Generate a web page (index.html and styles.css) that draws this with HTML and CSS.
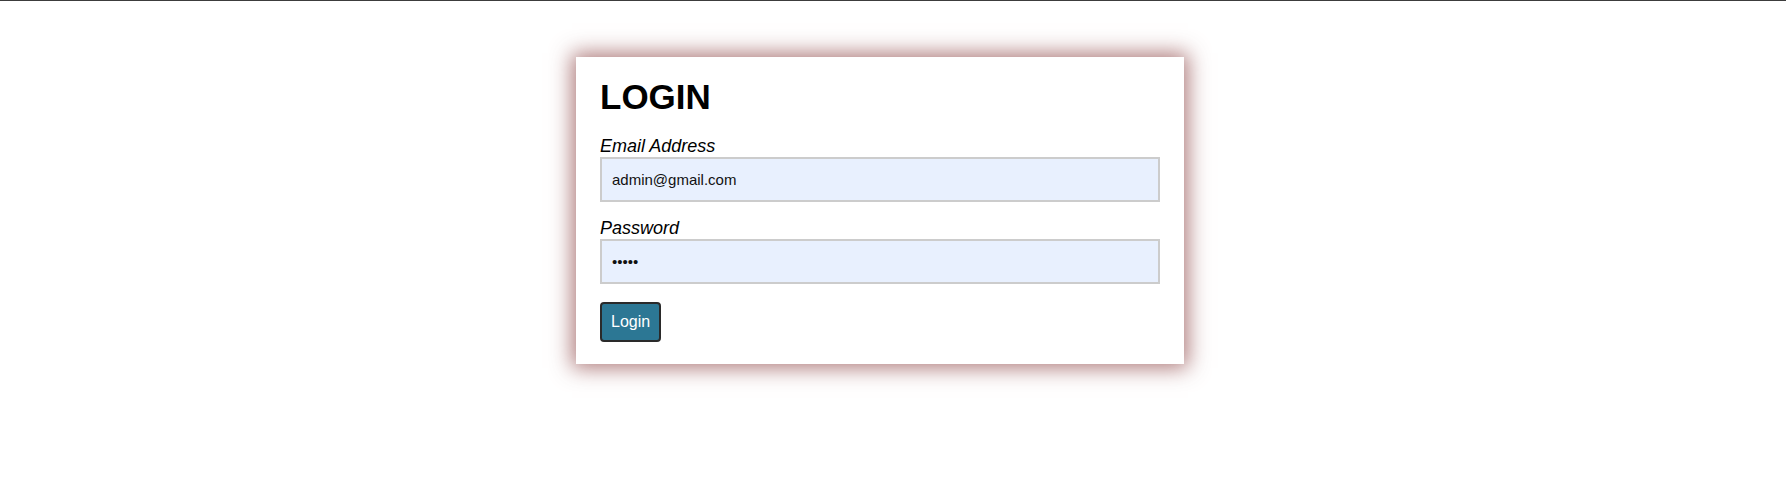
FILE: index.html
```html
<!DOCTYPE html>
<html lang="en">
<head>
<meta charset="utf-8">
<title>Login</title>
<link rel="stylesheet" href="styles.css">
</head>
<body>
<div class="topbar"></div>
<main class="page">
  <form class="card" onsubmit="return false;">
    <h1 class="title">LOGIN</h1>
    <label class="label" for="email">Email Address</label>
    <input class="field" id="email" type="text" value="admin@gmail.com">
    <label class="label" for="password">Password</label>
    <input class="field" id="password" type="password" value="admin">
    <button class="btn" type="submit">Login</button>
  </form>
</main>
</body>
</html>
```

FILE: styles.css
```css
html, body {
  margin: 0;
  padding: 0;
  background: #ffffff;
  font-family: "Liberation Sans", Arial, sans-serif;
  color: #000;
}

body {
  min-height: 479px;
}

.topbar {
  height: 1px;
  background: #3c3c3c;
}

.page {
  display: flex;
  justify-content: center;
  padding: 56px 26px 110px 0;
}

.card {
  width: 608px;
  box-sizing: border-box;
  padding: 20px 24px 22px;
  background: #ffffff;
  box-shadow: 0 0 20px 4px rgba(160, 100, 100, 0.85);
  display: flex;
  flex-direction: column;
  align-items: flex-start;
}

.title {
  margin: 0 0 19px;
  font-size: 35px;
  font-weight: bold;
  line-height: normal;
}

.label {
  font-size: 18px;
  font-style: italic;
  line-height: 21px;
}

.field {
  width: 100%;
  box-sizing: border-box;
  height: 45px;
  margin: 0 0 16px;
  padding: 0 10px;
  border: 2px solid #cccccc;
  background: #e8f0fe;
  font-family: "Liberation Sans", Arial, sans-serif;
  font-size: 15px;
  color: #111;
  outline: none;
}

#password {
  margin-bottom: 18px;
}

.btn {
  height: 40px;
  padding: 0 9px;
  border: 2px solid #2a2a2a;
  border-radius: 4px;
  background: #2c7794;
  color: #ffffff;
  font-family: "Liberation Sans", Arial, sans-serif;
  font-size: 16px;
  cursor: pointer;
}
```
